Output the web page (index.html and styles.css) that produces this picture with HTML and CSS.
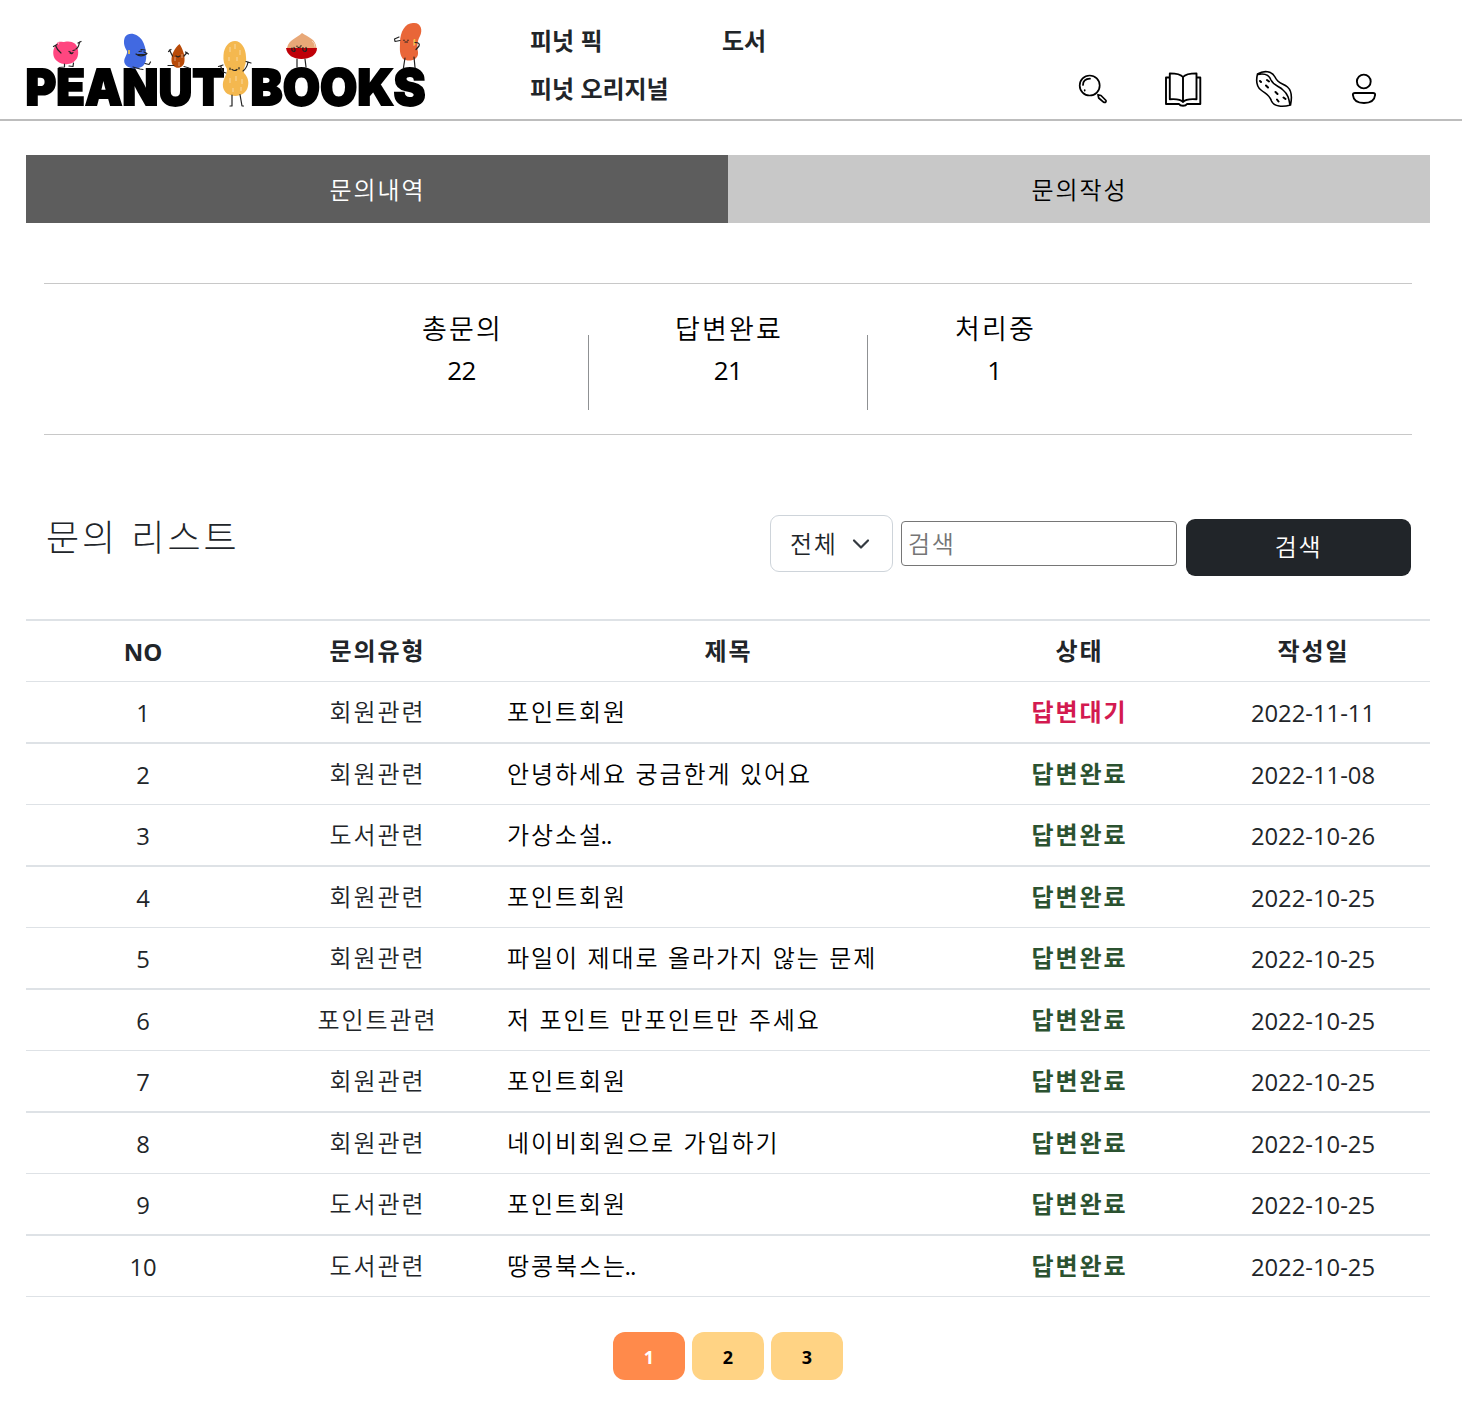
FILE: index.html
```html
<!DOCTYPE html>
<html lang="ko">
<head>
<meta charset="utf-8">
<title>PEANUT BOOKS</title>
<link rel="stylesheet" href="styles.css">
</head>
<body>
<header class="header">
  <svg class="logo" width="420" height="99" viewBox="24 20 420 99">
    <g class="wordmark">
      <text x="25.500" y="105" textLength="199" lengthAdjust="spacingAndGlyphs">PEANUT</text>
      <text x="250.500" y="105" textLength="175" lengthAdjust="spacingAndGlyphs">BOOKS</text>
    </g>
    <path fill="#ff4680" d="M57 43C59 40.500 62 42.500 65 41.700C72 40.500 77 43 78 50C79 57 76 61 72 63C68 65 61 64.500 57 61C53 58 53 53 53.500 50C54 47 56 46 57 43Z"/>
    <path fill="#4169e1" d="M125 37C129 31 138 34 142 40C147 48 148 62 143 66C138 70 128 69 125 64C122 59 128 55 127 51C124 46 123 42 125 37Z"/>
    <path fill="#b84a08" d="M179.500 44C182 48 185 54 184.500 61C184 70 172 70 171.500 61C171 54 175 48 179.500 44Z"/>
    <path fill="#f4b84f" d="M235 41C241 41 246 48 246 57C247 64 243 67 244 73C248 77 249 82 248 86C246 99 225 99 223 87C222 79 227 76 227 69C224 65 223 60 223.500 55C224 47 229 41 235 41Z"/>
    <path fill="#e8a878" d="M287 48C289 39 296 39 302 33C308 37 316 39 316.500 48Z"/>
    <path fill="#bf0008" d="M286 48H317C317 55 310 59 301.500 59C293 59 287 55 286 48Z"/>
    <path fill="#e96638" d="M400 43C400 32 405 23 413 23C421 22 423 30 420 36C417 41 417 47 418 52C419 61 408 62 403 59C399 54 400 48 400 43Z"/>
    <g fill="none" stroke="#fff" stroke-width=".8" opacity=".6">
      <path d="M55 47L56 44M58 45L59 42M175 61V57M179 66V62M182 58V54M230 52V47M235 49V44M240 55V50M229 61V57M237 61V57M230 83V78M236 81V76M242 84V79M233 92V88M241 91V87M312 41Q315 43 315 47M414 46V40"/>
    </g>
    <path fill="none" stroke="#f5c542" stroke-width="1.600" d="M129 50V54M414.500 39V45"/>
    <g class="limbs">
      <path d="M61 53Q57 50 55.500 45.500M53.500 46.500L57 44.500M76 49Q79 47 79.500 42M78 43L81 41.500M69 51.500L71 52.500M73 50.500L75 50M70 53Q72 54.500 73 52.500M64.500 64V67L59 67.500M69 66L73 66.500L73.500 63"/>
      <path d="M139 51.500L141.500 51M141 49.500L145 50M136 54Q141 58 147 53.500L144 52M146 54.500H138M145 63.500L149 64.500L150.500 62M133 67L140 69L143 69.500"/>
      <path d="M172.500 56L169.500 50M168.500 51.500L171 49.500M184 56L187 52.500M185.500 52L188.500 54M174 65.500L168 65.500M184 66.500L189 68M176 56L178 57L180 56"/>
      <path d="M226 73Q221 72 221 66M218.500 66.500L223 65M243 71Q247 68 248 62M246 61.500L251 63M230 68V69.500M239 67.500V69M232 69.500Q235 71.500 237 69.500M232 95V106H230M240 94.500L242 106H243.500"/>
      <path d="M292 48Q291 51.500 294.500 51.500Q296 50 294 47.500M303 47.500Q302 51.500 305.500 51.500Q307.500 50 306 47.500M297 46V46.500M301 45.500V46M298 47.500L300.500 47M297 59V67M305 59L306 67"/>
      <path d="M400 40.500L395 41.500L394.500 39L399 37M404 40V40.500M408 40L408 40.500M405 42L407.500 42M415 42.500Q420.500 42.500 419 46L416 49.500M405 58L403.500 67.500M414 57L415 67.500"/>
    </g>
  </svg>
  <nav class="nav">
    <a>피넛 픽</a><a>도서</a>
    <a>피넛 오리지널</a>
  </nav>
  <div class="tools">
    <svg width="30" height="30" viewBox="1078 74 30 30" stroke-width="1.700"><circle cx="1089.700" cy="85.500" r="10"/><path d="M1083 85Q1083 79 1090 78.700M1084.700 90V90.600M1098 94.700L1101 95.500L1106 100.500Q1106.500 103 1103.500 102.200L1098.700 98Z"/></svg>
    <svg width="38" height="38" viewBox="1164 70 38 38" stroke-width="1.900"><path d="M1183 77Q1180 73.500 1169.800 73.400V99.300Q1180 98.500 1183 102Q1186 98.500 1196.500 99.300V73.400Q1186 73.500 1183 77V102M1169.800 77.500H1166V104H1179Q1180 105.800 1183 105.800Q1186 105.800 1187 104H1200.300V77.500H1196.500"/></svg>
    <svg width="38" height="38" viewBox="1255 70 38 38" stroke-width="1.600"><path d="M1257.500 74C1264 70 1272 71 1275 77C1278 84 1283 83 1287.500 87C1292 91 1292 98 1290.500 105C1283 107 1274 107 1271.500 101C1269 94 1266 94 1261 90C1256 86 1256 80 1257.500 74Z M1258 74.500C1265 73 1269 75 1271 80C1274 86 1279 86 1283 90C1288 94 1289 99 1290 105"/><path stroke-width="2" d="M1260 81L1261 82M1267 80L1269 81.500M1266 85.500L1268 87.500M1275.500 92L1277.500 94M1283.500 97.500L1285.500 99M1277 99.500L1278.500 101.500"/></svg>
    <svg width="28" height="32" viewBox="1350 73 28 32" stroke-width="1.900"><circle cx="1363.800" cy="81.500" r="6.900"/><path d="M1355 93H1373Q1375.300 93 1375.100 95C1374.500 101 1370 103 1364 103C1358 103 1353.500 101 1352.900 95Q1352.700 93 1355 93Z"/></svg>
  </div>
</header>
<main class="main">
  <div class="tabs"><a class="tab tab-on">문의내역</a><a class="tab">문의작성</a></div>
  <section class="summary">
    <div class="stat"><span>총문의</span><b>22</b></div>
    <i class="divider"></i>
    <div class="stat"><span>답변완료</span><b>21</b></div>
    <i class="divider"></i>
    <div class="stat"><span>처리중</span><b>1</b></div>
  </section>
  <section class="listhead">
    <h2>문의 리스트</h2>
    <form class="search">
      <div class="select"><span>전체</span><svg width="18" height="12" viewBox="0 0 18 12"><path d="M2 2.500L9 9.500L16 2.500"/></svg></div>
      <input class="field" type="text" placeholder="검색">
      <button class="submit" type="button">검색</button>
    </form>
  </section>
  <table class="list">
    <thead><tr><th class="num">NO</th><th>문의유형</th><th class="wide">제목</th><th>상태</th><th>작성일</th></tr></thead>
    <tbody>
      <tr><td class="num">1</td><td>회원관련</td><td class="title">포인트회원</td><td class="wait">답변대기</td><td class="num">2022-11-11</td></tr>
      <tr><td class="num">2</td><td>회원관련</td><td class="title">안녕하세요 궁금한게 있어요</td><td class="done">답변완료</td><td class="num">2022-11-08</td></tr>
      <tr><td class="num">3</td><td>도서관련</td><td class="title">가상소설<span class="dots">..</span></td><td class="done">답변완료</td><td class="num">2022-10-26</td></tr>
      <tr><td class="num">4</td><td>회원관련</td><td class="title">포인트회원</td><td class="done">답변완료</td><td class="num">2022-10-25</td></tr>
      <tr><td class="num">5</td><td>회원관련</td><td class="title">파일이 제대로 올라가지 않는 문제</td><td class="done">답변완료</td><td class="num">2022-10-25</td></tr>
      <tr><td class="num">6</td><td>포인트관련</td><td class="title">저 포인트 만포인트만 주세요</td><td class="done">답변완료</td><td class="num">2022-10-25</td></tr>
      <tr><td class="num">7</td><td>회원관련</td><td class="title">포인트회원</td><td class="done">답변완료</td><td class="num">2022-10-25</td></tr>
      <tr><td class="num">8</td><td>회원관련</td><td class="title">네이비회원으로 가입하기</td><td class="done">답변완료</td><td class="num">2022-10-25</td></tr>
      <tr><td class="num">9</td><td>도서관련</td><td class="title">포인트회원</td><td class="done">답변완료</td><td class="num">2022-10-25</td></tr>
      <tr><td class="num">10</td><td>도서관련</td><td class="title">땅콩북스는<span class="dots">..</span></td><td class="done">답변완료</td><td class="num">2022-10-25</td></tr>
    </tbody>
  </table>
  <div class="pages"><a class="page page-on">1</a><a class="page">2</a><a class="page">3</a></div>
</main>
</body>
</html>
```
FILE: styles.css
```css
* { box-sizing: border-box; }
body {
  margin: 0;
  background: #fff;
  color: #212529;
  font: 350 24px/36px "Noto Sans CJK KR", sans-serif;
  letter-spacing: 1.9px;
}
.header {
  display: flex;
  height: 121px;
  padding-left: 24px;
  border-bottom: 2px solid #bdbdbd;
}
.logo { margin-top: 20px; flex: none; overflow: visible; }
.wordmark { font: 900 50px Inter, sans-serif; letter-spacing: 0; stroke: #000; stroke-width: 1.8; }
.limbs { fill: none; stroke: #222; stroke-width: 1.2; stroke-linecap: round; stroke-linejoin: round; }
.nav {
  display: grid;
  grid-template-columns: 192px 192px;
  grid-auto-rows: 48px;
  margin-left: 86px;
  padding-top: 16px;
  line-height: 48px;
  font-weight: 700;
  letter-spacing: -.1px;
  height: 112px;
}
.tools {
  display: flex;
  align-items: center;
  height: 38px;
  margin: 70px 0 0 164px;
  fill: none;
}
.tools svg { stroke: #000; stroke-linejoin: round; stroke-linecap: round; }
.tools svg:nth-child(2) { margin: 0 53px 0 56px; }
.tools svg:nth-child(4) { margin-left: 57px; }
.main { width: 1404px; margin: 34px 0 0 26px; }
.tabs { display: flex; height: 68px; color: #000; }
.tab { flex: 1; padding-left: 1px; background: #c8c8c8; text-align: center; line-height: 67px; }
.tab-on { background: #5d5d5d; color: #fff; }
.summary {
  display: flex;
  justify-content: center;
  height: 152px;
  margin: 60px 18px 0;
  padding-top: 23px;
  border: solid #c8c8c8;
  border-width: 1px 0;
  color: #000;
}
.stat { width: 253px; display: flex; flex-direction: column; align-items: center; font-size: 27px; line-height: 42px; }
.stat span { letter-spacing: 2.2px; margin-right: -2px; }
.stat:nth-child(3) { width: 278px; }
.stat b { font: 400 26px/42px "Open Sans", sans-serif; letter-spacing: -.5px; }
.divider { width: 1px; height: 75px; margin-top: 28px; background: #8f9193; }
.listhead { display: flex; justify-content: space-between; height: 184px; padding: 80px 19px 0 20px; }
h2 { margin: 0; font-size: 36px; line-height: 40px; font-weight: 300; letter-spacing: 3px; }
.search { display: flex; gap: 8px; }
.select {
  display: flex;
  align-items: center;
  gap: 14px;
  width: 123px;
  height: 57px;
  padding-left: 19px;
  border: 1px solid #ced4da;
  border-radius: 9px;
}
.select span { padding-bottom: 2px; letter-spacing: 1.7px; }
.select svg { fill: none; stroke: #343a40; stroke-width: 2.2; stroke-linecap: round; stroke-linejoin: round; }
.field {
  width: 276px;
  height: 45px;
  margin-top: 6px;
  padding: 0 6px 2px;
  border: 1px solid #767676;
  border-radius: 4px;
  font: inherit;
  letter-spacing: 1.7px;
}
.field::placeholder { color: #757575; }
.submit {
  width: 225px;
  height: 57px;
  margin: 4px 0 0 1px;
  padding: 0 0 3px;
  border: 0;
  border-radius: 9px;
  background: #212529;
  color: #fff;
  font: inherit;
  letter-spacing: 1.7px;
}
.list { width: 100%; table-layout: fixed; border-spacing: 0; border-top: 2px solid #dee2e6; text-align: center; }
.list th, .list td { height: 61px; padding: 0 12px 2px 13px; border-bottom: 1px solid #dee2e6; }
.list tbody tr:nth-child(odd) td { height: 62px; border-bottom-width: 2px; }
.list th { font-weight: 700; }
.wide { width: 468px; }
.list .title { text-align: left; color: #000; }
.dots { margin-left: -2.5px; letter-spacing: -.8px; }
.list .num { font-family: "Open Sans", sans-serif; letter-spacing: 0; padding: 2px 12px 0; }
.list td.num { font-size: 23.8px; font-weight: 380; }
.wait, .done { font-weight: 700; }
.wait { color: #d31a50; }
.done { color: #2b5230; }
.pages { display: flex; justify-content: center; gap: 7px; margin-top: 35px; }
.page {
  width: 72px;
  height: 48px;
  border-radius: 12px;
  background: #ffd384;
  color: #000;
  text-align: center;
  font: 700 18px/50px "Noto Sans", sans-serif;
  letter-spacing: 0;
}
.page-on { background: #ff8a4b; color: #fff; }
```
